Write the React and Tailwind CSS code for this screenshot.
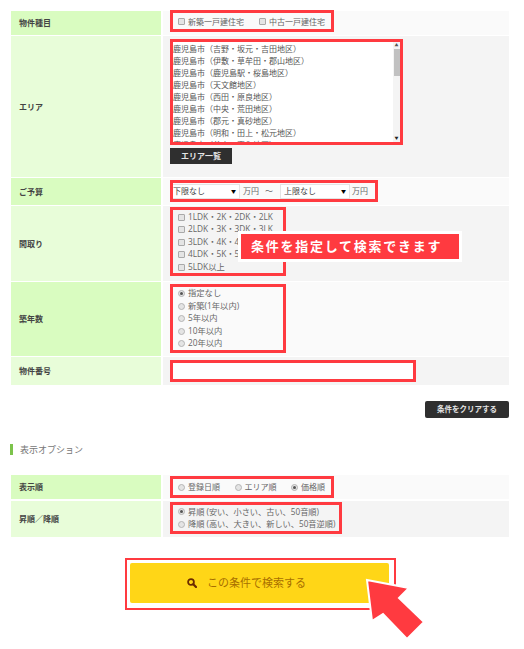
import React from 'react';

const FONT = "font-['Open_Sans','Noto_Sans_CJK_JP',sans-serif]";

const AREAS = [
  '鹿児島市（吉野・坂元・吉田地区）',
  '鹿児島市（伊敷・草牟田・郡山地区）',
  '鹿児島市（鹿児島駅・桜島地区）',
  '鹿児島市（天文館地区）',
  '鹿児島市（西田・原良地区）',
  '鹿児島市（中央・荒田地区）',
  '鹿児島市（郡元・真砂地区）',
  '鹿児島市（明和・田上・松元地区）',
  '鹿児島市（谷山・喜入地区）',
];

const LAYOUTS = ['1LDK・2K・2DK・2LK', '2LDK・3K・3DK・3LK', '3LDK・4K・4DK・4LK', '4LDK・5K・5DK・5LK', '5LDK以上'];
const AGES = ['指定なし', '新築(1年以内)', '5年以内', '10年以内', '20年以内'];

function Check() {
  return <span className="w-[7px] h-[7px] shrink-0 rounded-[1px] bg-[#e4e4e4] border border-[#a9a9a9]" />;
}

function Radio({ on }) {
  return (
    <span className="w-[7px] h-[7px] shrink-0 rounded-full bg-[#e4e4e4] border border-[#b5b5b5] flex items-center justify-center">
      {on && <span className="w-[3px] h-[3px] rounded-full bg-[#555]" />}
    </span>
  );
}

function Row({ label, height, even, children }) {
  return (
    <div className="flex gap-[2px]" style={{ height }}>
      <div className={`w-[150px] shrink-0 flex items-center pl-[8px] font-bold text-[8px] text-[#444] ${even ? 'bg-[#e8fdd9]' : 'bg-[#d9fcc0]'}`}>
        {label}
      </div>
      <div className={`w-[346px] pl-[7px] ${even ? 'bg-[#f4f4f4]' : 'bg-[#fafafa]'}`}>{children}</div>
    </div>
  );
}

function Boxed({ className, children }) {
  return <div className={`border-[3px] border-[#ff3a40] ${className}`}>{children}</div>;
}

function FakeSelect({ label, className }) {
  return (
    <div className={`h-[15px] bg-white border-y border-r border-[#e4e4e4] flex items-center justify-between text-[8px] text-[#444] ${className}`}>
      <span>{label}</span>
      <span className="text-[5px] text-black leading-none">▼</span>
    </div>
  );
}

export default function App() {
  return (
    <div className={`relative w-[524px] h-[649px] bg-white overflow-hidden text-[#666] text-[8px] ${FONT}`}>
      <div className="pl-[11px] pt-[11px] flex flex-col gap-[1px]">
        <Row label="物件種目" height={24}>
          <Boxed className="w-[164px] h-[22px] -mt-px flex items-center gap-[15px] pl-[5px] pt-px">
            <span className="flex items-center gap-[3px]"><Check />新築一戸建住宅</span>
            <span className="flex items-center gap-[3px]"><Check />中古一戸建住宅</span>
          </Boxed>
        </Row>

        <Row label="エリア" height={141} even>
          <Boxed className="w-[233px] h-[106px] mt-[3px] bg-white relative overflow-hidden">
            <div className="pt-px text-[#555] leading-[12px]">
              {AREAS.map((a) => <div key={a}>{a}</div>)}
            </div>
            <div className="absolute right-0 top-0 bottom-0 w-[7px] bg-[#f4f4f4] flex flex-col items-center">
              <span className="text-[4px] leading-[7px] text-[#555]">▲</span>
              <span className="w-[6px] h-[27px] bg-[#c1c1c1]" />
              <span className="text-[4px] leading-[7px] text-[#222] mt-auto">▼</span>
            </div>
          </Boxed>
          <button className="block mt-[3px] w-[62px] h-[16px] bg-[#2f2f2f] text-[#e4e4e4] text-[8px] font-bold">エリア一覧</button>
        </Row>

        <Row label="ご予算" height={27}>
          <Boxed className="w-[208px] h-[22px] mt-[2px] flex items-center text-[8px]">
            <FakeSelect label="下限なし" className="w-[67px] pr-[3px]" />
            <span className="ml-[3px]">万円</span>
            <span className="ml-[6px]">～</span>
            <FakeSelect label="上限なし" className="w-[70px] ml-[7px] pl-[3px] pr-[3px] border-l" />
            <span className="ml-[2px]">万円</span>
          </Boxed>
        </Row>

        <Row label="間取り" height={75} even>
          <Boxed className="w-[116px] h-[69px] mt-px flex flex-col justify-center pl-[5px] pt-px text-[8.3px] leading-[12.5px]">
            {LAYOUTS.map((l) => (
              <span key={l} className="flex items-center gap-[3px] whitespace-nowrap"><Check />{l}</span>
            ))}
          </Boxed>
        </Row>

        <Row label="築年数" height={74}>
          <Boxed className="w-[116px] h-[69px] mt-[2px] flex flex-col justify-center pl-[5px] text-[8.3px] leading-[12.5px]">
            {AGES.map((a, i) => (
              <span key={a} className="flex items-center gap-[3px]"><Radio on={i === 0} />{a}</span>
            ))}
          </Boxed>
        </Row>

        <Row label="物件番号" height={28} even>
          <Boxed className="w-[246px] h-[22px] mt-[3px] bg-white" />
        </Row>
      </div>

      <div className="flex justify-end pr-[15px] mt-[16px]">
        <button className="w-[84px] h-[17px] rounded-[2px] bg-[#2f2f2f] text-[#e4e4e4] text-[7.5px] font-bold">条件をクリアする</button>
      </div>

      <div className="ml-[10px] mt-[26px] pl-[7px] h-[11px] border-l-[3px] border-[#7cc34b] flex items-center text-[9px] text-[#777]">
        表示オプション
      </div>

      <div className="pl-[11px] mt-[20px] flex flex-col gap-[2px]">
        <Row label="表示順" height={24}>
          <Boxed className="w-[164px] h-[22px] mt-px flex items-center pl-[5px] gap-[14.5px]">
            <span className="flex items-center gap-[3px]"><Radio />登録日順</span>
            <span className="flex items-center gap-[3px]"><Radio />エリア順</span>
            <span className="flex items-center gap-[3px]"><Radio on />価格順</span>
          </Boxed>
        </Row>
        <Row label="昇順／降順" height={36} even>
          <Boxed className="w-[172px] h-[32px] mt-px flex flex-col justify-center pl-[5px] text-[8.2px] leading-[12.5px] whitespace-nowrap">
            <span className="flex items-center gap-[3px]"><Radio on />昇順 (安い、小さい、古い、50音順)</span>
            <span className="flex items-center gap-[3px]"><Radio />降順 (高い、大きい、新しい、50音逆順)</span>
          </Boxed>
        </Row>
      </div>

      <div className="ml-[125px] mt-[21px] w-[271px] h-[52px] border-[2px] border-[#ff3a40] p-[3px]">
        <button className="w-[259px] h-[40px] pr-[26px] rounded-[2px] bg-[#ffd617] flex items-center justify-center gap-[10px] text-[11px] text-[#a86f00]">
          <svg width="10" height="10" viewBox="0 0 10 10" fill="none" stroke="#6b2b00" strokeWidth="1.8" strokeLinecap="round">
            <circle cx="4" cy="4" r="2.9" />
            <path d="M6.3 6.3 L9 9" strokeWidth="2.2" />
          </svg>
          この条件で検索する
        </button>
      </div>

      {/* 注釈ラベルと矢印 */}
      <div className="absolute left-[238px] top-[231px] border-[3px] border-white bg-[#ff3a40] w-[224px] h-[31px] flex items-center pl-[10px] text-white font-bold text-[13px] tracking-[1.75px] whitespace-nowrap">
        条件を指定して検索できます
      </div>
      <svg className="absolute left-0 top-0 pointer-events-none" width="524" height="649" viewBox="0 0 524 649">
        <polygon points="367,580 409,588 399,598 424,622 407,639 383,614 372,621" fill="#ff3a40" stroke="#fff" strokeWidth="2" />
      </svg>
    </div>
  );
}
